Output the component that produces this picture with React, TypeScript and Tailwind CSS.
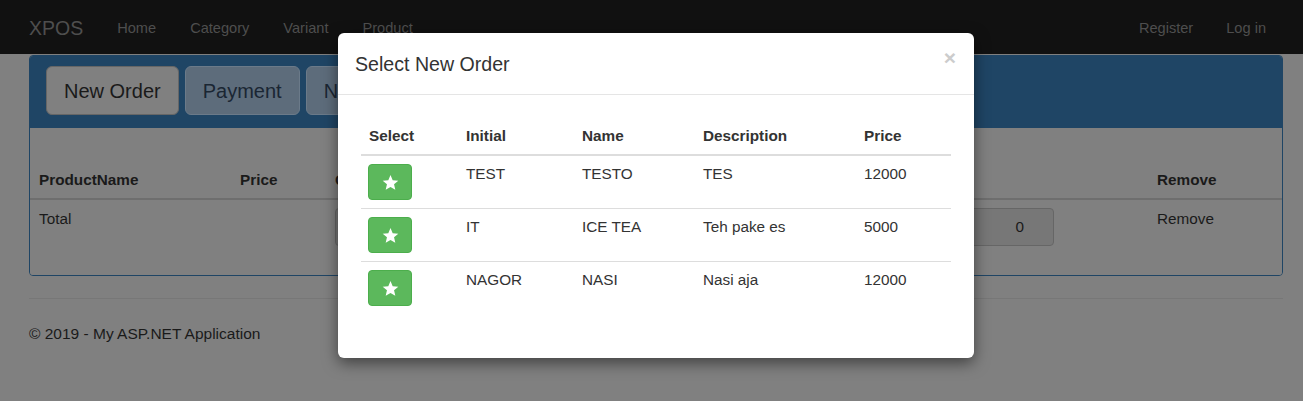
import React from "react";

const products = [
  { initial: "TEST", name: "TESTO", description: "TES", price: 12000 },
  { initial: "IT", name: "ICE TEA", description: "Teh pake es", price: 5000 },
  { initial: "NAGOR", name: "NASI", description: "Nasi aja", price: 12000 },
];

const NavBar = () => (
  <div className="h-[54px] bg-[#111111] flex items-center pt-[3px] pl-[29px] pr-[37px] text-[14.6px] text-[#4e4e4e]">
    <span className="text-[19.5px] mr-[34px]">XPOS</span>
    <div className="flex gap-[34px]">
      <span>Home</span>
      <span>Category</span>
      <span>Variant</span>
      <span>Product</span>
    </div>
    <div className="ml-auto flex gap-[33px]">
      <span>Register</span>
      <span>Log in</span>
    </div>
  </div>
);

const OrderPanel = () => (
  <div className="border border-[#1f4565] rounded-[4px] overflow-hidden">
    <div className="h-[72px] bg-[#1f4565] flex items-start gap-[6px] pl-[16px] pt-[10px]">
      <div className="h-[49px] px-[17px] flex items-center rounded-[6px] border border-[#666] bg-[#808080] text-[20px] text-[#1a1a1a]">
        New Order
      </div>
      <div className="h-[49px] px-[17px] flex items-center rounded-[6px] border border-[#6b7a89] bg-[#5d6c7b] text-[20px] text-[#1a2633]">
        Payment
      </div>
      <div className="h-[49px] px-[17px] flex items-center rounded-[6px] border border-[#6b7a89] bg-[#5d6c7b] text-[20px] text-[#1a2633]">
        New
      </div>
    </div>
    <div className="bg-[#808080] pt-[34px] pb-[29px]">
      <table className="w-full text-[15.3px] leading-[20px] text-[#1a1a1a]">
        <thead>
          <tr className="border-b-2 border-[#6e6e6e]">
            <th className="text-left font-bold py-[8px] pl-[9px] w-[202px]">ProductName</th>
            <th className="text-left font-bold py-[8px] pl-[8px] w-[95px]">Price</th>
            <th className="text-left font-bold py-[8px] pl-[8px]">Quantity</th>
            <th className="text-left font-bold py-[8px] pl-[8px] w-[133px]">Remove</th>
          </tr>
        </thead>
        <tbody>
          <tr>
            <td className="pt-[9px] pl-[9px] align-top">Total</td>
            <td></td>
            <td className="pt-[8px] pl-[8px] pr-[95px] align-top">
              <div className="h-[38px] rounded-[4px] border border-[#666] bg-[#777] flex items-center justify-end pr-[29px]">
                0
              </div>
            </td>
            <td className="pt-[9px] pl-[8px] align-top">Remove</td>
          </tr>
        </tbody>
      </table>
    </div>
  </div>
);

const Star = () => (
  <svg width="17" height="17" viewBox="0 0 24 24" fill="#fff">
    <path d="M12 1.5l3.1 7.3 7.9.6-6 5.2 1.8 7.7L12 18.2l-6.8 4.1 1.8-7.7-6-5.2 7.9-.6z" />
  </svg>
);

const SelectModal = () => (
  <div className="absolute left-[338px] top-[33px] w-[636px] bg-white rounded-[6px] shadow-[0_5px_15px_rgba(0,0,0,0.5)] text-[#333]">
    <div className="h-[62px] border-b border-[#e5e5e5] flex items-center justify-between pl-[17px] pr-[18px]">
      <span className="text-[19.6px] leading-[22px] mt-[1px]">Select New Order</span>
      <span className="text-[21px] font-bold text-[#cccccc] leading-none -mt-[13px]">×</span>
    </div>
    <div className="pt-[23px] pb-[44px] px-[23px]">
      <table className="w-full text-[15.3px] leading-[20px]">
        <thead>
          <tr className="border-b-2 border-[#dddddd]">
            <th className="text-left font-bold px-[8px] py-[8px] w-[97px]">Select</th>
            <th className="text-left font-bold px-[8px] py-[8px] w-[116px]">Initial</th>
            <th className="text-left font-bold px-[8px] py-[8px] w-[121px]">Name</th>
            <th className="text-left font-bold px-[8px] py-[8px] w-[161px]">Description</th>
            <th className="text-left font-bold px-[8px] py-[8px]">Price</th>
          </tr>
        </thead>
        <tbody>
          {products.map((p, i) => (
            <tr key={i} className={i > 0 ? "border-t border-[#dddddd]" : ""}>
              <td className="px-[7px] py-[8px] align-top">
                <div className="w-[44px] h-[36px] rounded-[4px] bg-[#5cb85c] border border-[#4cae4c] flex items-center justify-center">
                  <Star />
                </div>
              </td>
              <td className="px-[8px] pt-[8px] align-top">{p.initial}</td>
              <td className="px-[8px] pt-[8px] align-top">{p.name}</td>
              <td className="px-[8px] pt-[8px] align-top">{p.description}</td>
              <td className="px-[8px] pt-[8px] align-top">{p.price}</td>
            </tr>
          ))}
        </tbody>
      </table>
    </div>
  </div>
);

export default function App() {
  return (
    <div className="relative w-[1303px] h-[401px] overflow-hidden bg-[#808080] font-['Liberation_Sans',Arial,sans-serif]">
      <NavBar />
      <div className="pl-[29px] pr-[20px]">
        <div className="pt-px">
          <OrderPanel />
        </div>
        <hr className="mt-[22px] border-t border-[#777777]" />
        <div className="pt-[23px] text-[15.5px] text-[#1a1a1a]">© 2019 - My ASP.NET Application</div>
      </div>
      <SelectModal />
    </div>
  );
}
